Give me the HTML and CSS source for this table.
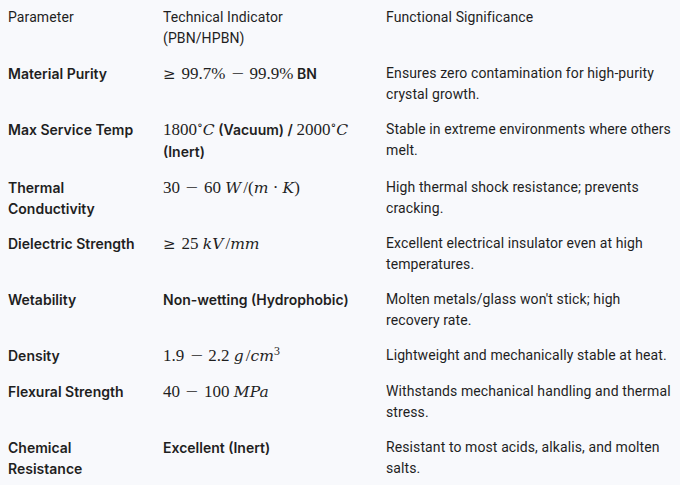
FILE: index.html
```html
<!DOCTYPE html>
<html>
<head>
<meta charset="utf-8">
<link rel="stylesheet" href="styles.css">
</head>
<body>
<table class="spec">
  <colgroup>
    <col class="c1"><col class="c2"><col class="c3">
  </colgroup>
  <thead>
    <tr><th>Parameter</th><th>Technical Indicator (PBN/HPBN)</th><th>Functional Significance</th></tr>
  </thead>
  <tbody>
    <tr>
      <td class="label">Material Purity</td>
      <td><span class="m"><span class="rel">≥</span>99.7% <span class="op">−</span> 99.9%</span> <b>BN</b></td>
      <td>Ensures zero contamination for high-purity crystal growth.</td>
    </tr>
    <tr>
      <td class="label">Max Service Temp</td>
      <td><span class="m">1800<sup>∘</sup><i>C</i></span> <b>(Vacuum) / </b><span class="m">2000<sup>∘</sup><i>C</i></span> <b>(Inert)</b></td>
      <td>Stable in extreme environments where others melt.</td>
    </tr>
    <tr>
      <td class="label">Thermal Conductivity</td>
      <td><span class="m">30 <span class="op">−</span> 60 <i class="ic">W</i>/(<i>m</i> · <i>K</i>)</span></td>
      <td>High thermal shock resistance; prevents cracking.</td>
    </tr>
    <tr>
      <td class="label">Dielectric Strength</td>
      <td><span class="m"><span class="rel">≥</span>25 <i class="ic">kV</i>/<i>mm</i></span></td>
      <td>Excellent electrical insulator even at high temperatures.</td>
    </tr>
    <tr>
      <td class="label">Wetability</td>
      <td><b>Non-wetting (Hydrophobic)</b></td>
      <td>Molten metals/glass won't stick; high recovery rate.</td>
    </tr>
    <tr>
      <td class="label">Density</td>
      <td><span class="m">1.9 <span class="op">−</span> 2.2 <i class="ic">g</i>/<i>cm</i><sup>3</sup></span></td>
      <td>Lightweight and mechanically stable at heat.</td>
    </tr>
    <tr>
      <td class="label">Flexural Strength</td>
      <td><span class="m">40 <span class="op">−</span> 100 <i>MPa</i></span></td>
      <td>Withstands mechanical handling and thermal stress.</td>
    </tr>
    <tr>
      <td class="label">Chemical Resistance</td>
      <td><b>Excellent (Inert)</b></td>
      <td>Resistant to most acids, alkalis, and molten salts.</td>
    </tr>
  </tbody>
</table>
</body>
</html>
```
FILE: styles.css
```css
html, body {
  margin: 0;
  padding: 0;
  background: #f8f9fc;
}
body {
  font-family: Roboto, "Noto Sans", sans-serif;
  font-size: 14px;
  line-height: 21px;
  color: #1f1f1f;
  letter-spacing: 0.1px;
}
.spec {
  border-collapse: collapse;
  table-layout: fixed;
  width: 680px;
}
.c1 { width: 155px; }
.c2 { width: 223px; }
.c3 { width: 302px; }
.spec th,
.spec td {
  text-align: left;
  vertical-align: top;
  padding: 7px 12px 7px 8px;
  font-weight: 400;
}
.spec th:last-child,
.spec td:last-child { padding-right: 6px; }
.spec td.label,
.spec b {
  font-family: Inter, Roboto, sans-serif;
  font-weight: 600;
  font-size: 14px;
  letter-spacing: 0;
}
.m {
  font-family: "Liberation Serif", "DejaVu Serif", serif;
  font-size: 17px;
  white-space: nowrap;
  letter-spacing: 0;
}
.m i {
  font-family: "DejaVu Serif", serif;
  font-size: 15.5px;
}
.m i.ic { padding-right: 2px; }
.m .rel {
  font-family: "DejaVu Serif", serif;
  font-size: 15px;
  padding-right: 6px;
}
.m .op {
  display: inline-block;
  transform: scaleX(1.3);
  padding: 0 3px;
}
.m sup {
  font-size: 0.7em;
  line-height: 0;
  vertical-align: 0.5em;
}
```
